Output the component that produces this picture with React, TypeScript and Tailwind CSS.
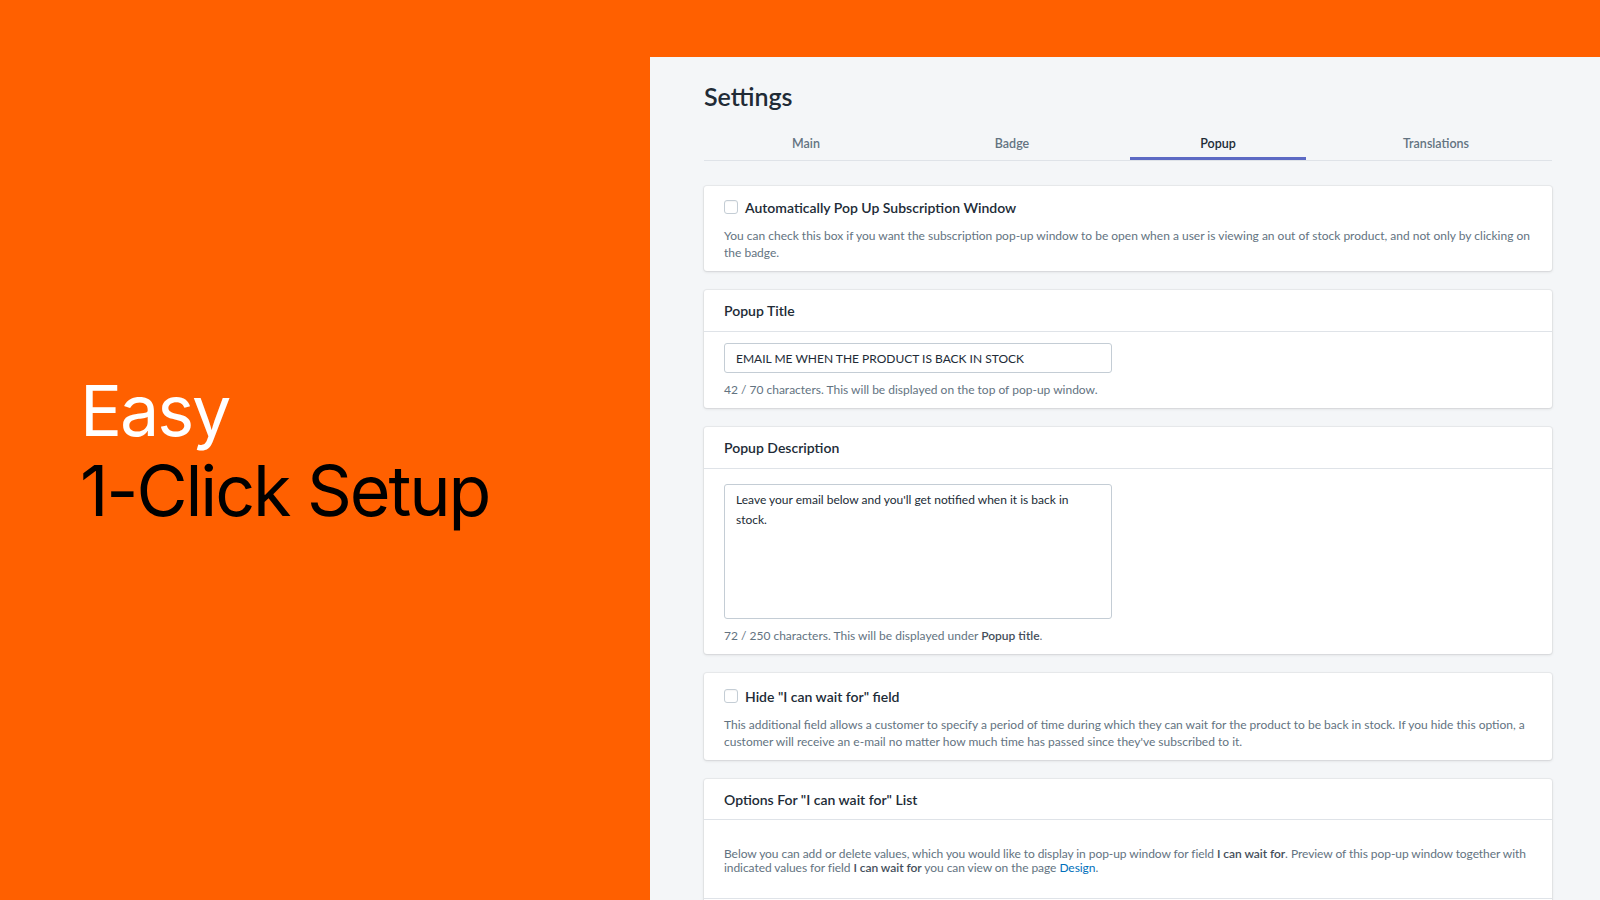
export default function App() {
  const tabs = [
    { label: "Main", w: "w-[204px]" },
    { label: "Badge", w: "w-[208px]" },
    { label: "Popup", w: "w-[204px]", active: true },
    { label: "Translations", w: "flex-1" },
  ]

  const card =
    "bg-white rounded-[3px] shadow-[0_0_0_1px_rgba(63,63,68,0.05),0_1px_3px_0_rgba(63,63,68,0.15)]"

  return (
    <div className="w-[1600px] h-[900px] flex bg-[#ff6000] overflow-hidden font-['Lato','Liberation_Sans',sans-serif]">
      {/* left promo */}
      <div className="w-[650px] h-full flex items-center pl-[80px] pt-[2px]">
        <h1 className="font-['Inter','Liberation_Sans',sans-serif] text-[70px] leading-[80px] tracking-[-0.03em] font-normal">
          <span className="block text-white">Easy</span>
          <span className="block text-black">1-Click Setup</span>
        </h1>
      </div>

      {/* settings panel */}
      <div className="flex-1 flex flex-col pt-[57px]">
        <div className="flex-1 bg-[#f4f6f8] pl-[54px] pr-[48px] pt-[23px] overflow-hidden text-[#212b36]">
          <h2 className="text-[25px] leading-[32px] font-semibold">Settings</h2>

          <div className="mt-[24px] flex border-b border-[#dfe3e8]">
            {tabs.map((t) => (
              <div key={t.label} className={`${t.w} flex flex-col items-center`}>
                <span
                  className={`h-[21px] leading-[16px] text-[12.5px] font-semibold ${
                    t.active ? "text-[#212b36]" : "text-[#637381]"
                  }`}
                >
                  {t.label}
                </span>
                <div
                  className={`h-[3px] self-stretch mx-[14px] ${
                    t.active ? "bg-[#5c6ac4]" : "bg-transparent"
                  }`}
                />
              </div>
            ))}
          </div>

          <div className="mt-[25px] flex flex-col gap-[19px]">
            {/* auto popup */}
            <div className={`${card} px-[20px] pt-[11px] pb-[10px]`}>
              <label className="flex items-center gap-[7px] h-[20px]">
                <span className="w-[14px] h-[14px] rounded-[3px] border border-[#c4cdd5] bg-white shadow-[inset_0_1px_1px_rgba(0,0,0,0.04)]" />
                <span className="text-[14px] font-semibold">Automatically Pop Up Subscription Window</span>
              </label>
              <p className="mt-[10px] text-[12px] leading-[17px] text-[#637381]">
                You can check this box if you want the subscription pop-up window to be open when a user is viewing an out of stock product, and not only by clicking on the badge.
              </p>
            </div>

            {/* popup title */}
            <div className={card}>
              <div className="h-[42px] px-[20px] flex items-center border-b border-[#dfe3e8]">
                <h3 className="text-[14px] font-semibold">Popup Title</h3>
              </div>
              <div className="px-[20px] pt-[11px] pb-[10px]">
                <input
                  readOnly
                  value="EMAIL ME WHEN THE PRODUCT IS BACK IN STOCK"
                  className="block w-[388px] h-[30px] px-[11px] border border-[#c4cdd5] rounded-[3px] text-[12px] text-[#212b36] outline-none"
                />
                <p className="mt-[8px] text-[12px] leading-[17px] text-[#637381]">
                  42 / 70 characters. This will be displayed on the top of pop-up window.
                </p>
              </div>
            </div>

            {/* popup description */}
            <div className={card}>
              <div className="h-[42px] px-[20px] flex items-center border-b border-[#dfe3e8]">
                <h3 className="text-[14px] font-semibold">Popup Description</h3>
              </div>
              <div className="px-[20px] pt-[15px] pb-[10px]">
                <textarea
                  readOnly
                  value="Leave your email below and you'll get notified when it is back in stock."
                  className="block w-[388px] h-[135px] px-[11px] pt-[5px] border border-[#c4cdd5] rounded-[3px] text-[12px] leading-[20px] text-[#212b36] resize-none outline-none"
                />
                <p className="mt-[8px] text-[12px] leading-[17px] text-[#637381]">
                  72 / 250 characters. This will be displayed under{" "}
                  <span className="font-semibold text-[#454f5b]">Popup title</span>.
                </p>
              </div>
            </div>

            {/* hide field */}
            <div className={`${card} px-[20px] pt-[13px] pb-[10px]`}>
              <label className="flex items-center gap-[7px] h-[20px]">
                <span className="w-[14px] h-[14px] rounded-[3px] border border-[#c4cdd5] bg-white shadow-[inset_0_1px_1px_rgba(0,0,0,0.04)]" />
                <span className="text-[14px] font-semibold">Hide "I can wait for" field</span>
              </label>
              <p className="mt-[10px] text-[12px] leading-[17px] text-[#637381]">
                This additional field allows a customer to specify a period of time during which they can wait for the product to be back in stock. If you hide this option, a customer will receive an e-mail no matter how much time has passed since they've subscribed to it.
              </p>
            </div>

            {/* options list */}
            <div className={card}>
              <div className="h-[41px] px-[20px] flex items-center border-b border-[#dfe3e8]">
                <h3 className="text-[14px] font-semibold">Options For "I can wait for" List</h3>
              </div>
              <div className="pl-[20px] pr-[10px] pt-[27px] pb-[23px] border-b border-[#dfe3e8]">
                <p className="text-[12px] leading-[14px] tracking-[-0.005em] text-[#637381]">
                  Below you can add or delete values, which you would like to display in pop-up window for field{" "}
                  <span className="font-semibold text-[#454f5b]">I can wait for</span>. Preview of this pop-up window together with indicated values for field{" "}
                  <span className="font-semibold text-[#454f5b]">I can wait for</span> you can view on the page{" "}
                  <span className="text-[#006fbb]">Design</span>.
                </p>
              </div>
              <div className="h-[60px]" />
            </div>
          </div>
        </div>
      </div>
    </div>
  )
}
